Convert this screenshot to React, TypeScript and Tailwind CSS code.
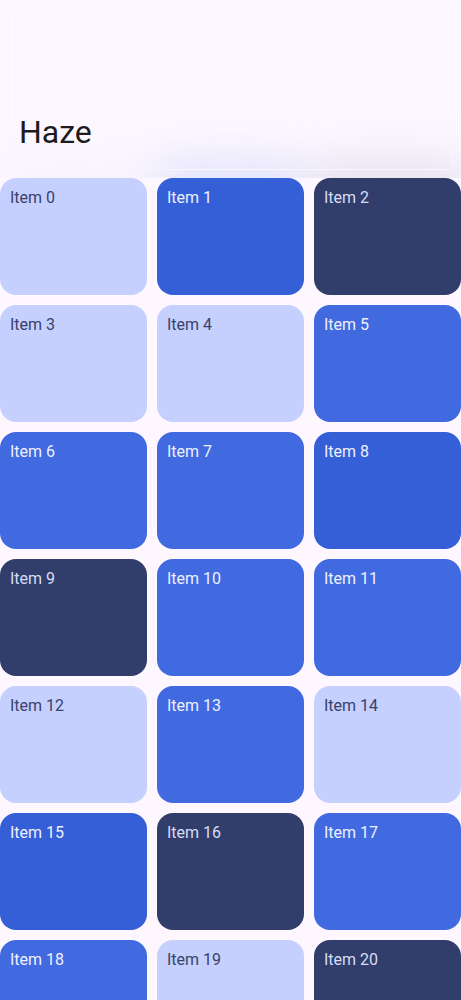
const colors = [
  "light", "blue", "navy",
  "light", "light", "mid",
  "mid", "mid", "blue",
  "navy", "mid", "mid",
  "light", "mid", "light",
  "blue", "navy", "mid",
  "mid", "light", "navy",
];

const tone: Record<string, string> = {
  light: "bg-[#c6d0fe] text-[#38426a]",
  blue: "bg-[#355fd7] text-[#eef0ff]",
  mid: "bg-[#416ae0] text-[#eef0ff]",
  navy: "bg-[#313d6a] text-[#d6dcf7]",
};

const Header = () => {
  return (
    <header className="relative h-[178px] overflow-hidden bg-[#fdf7ff]">
      {/* blurred content showing through the haze */}
      <div className="absolute left-[150px] top-[165px] h-[40px] w-[160px] rounded-full bg-[#c9d2f8] opacity-70 blur-xl" />
      <div className="absolute left-[310px] top-[165px] h-[40px] w-[160px] rounded-full bg-[#cfcfe0] opacity-70 blur-xl" />
      <div className="absolute left-[0px] top-[170px] h-[30px] w-[150px] rounded-full bg-[#eceefd] opacity-60 blur-xl" />
      <div className="absolute inset-[8px] border border-[#fbf4fd]" />
      <h1 className="absolute left-[19px] top-[110px] text-[32px] leading-[44px] text-[#1d1b20]">
        Haze
      </h1>
    </header>
  );
};

export default function App() {
  return (
    <div
      className="min-h-screen bg-[#fef7ff]"
      style={{ fontFamily: "Roboto, 'Noto Sans', sans-serif" }}
    >
      <Header />
      <div className="grid grid-cols-3 gap-[10px]">
        {colors.map((c, i) => (
          <div
            key={i}
            className={`h-[117px] rounded-2xl px-[10px] pt-[9px] text-[16px] leading-[22px] ${tone[c]}`}
          >
            Item {i}
          </div>
        ))}
      </div>
    </div>
  );
}
